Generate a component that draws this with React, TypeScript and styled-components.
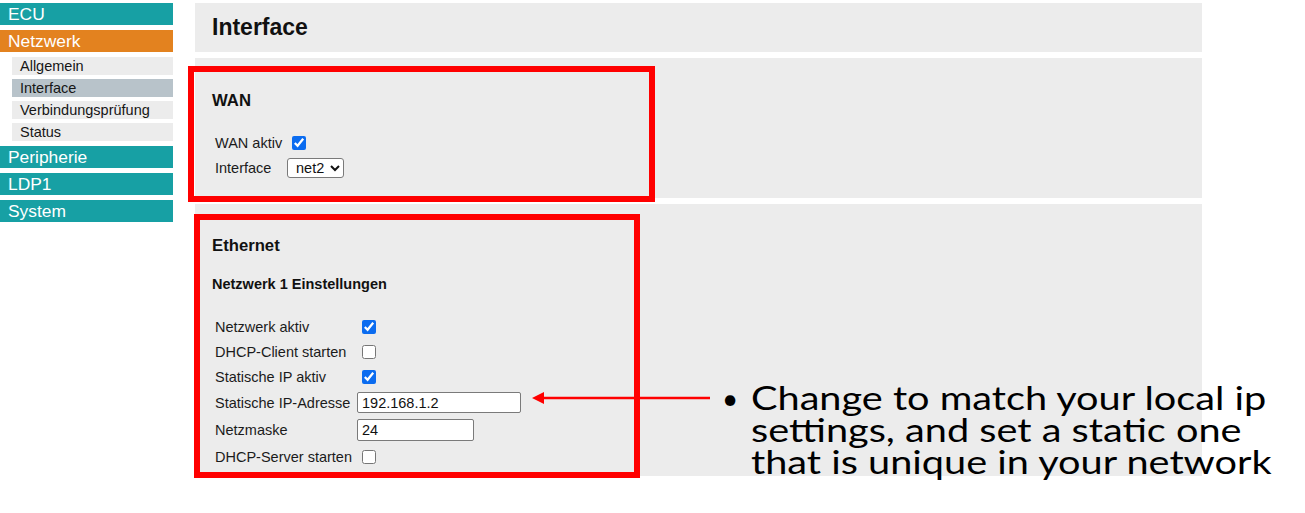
import React from "react";
import styled, { createGlobalStyle } from "styled-components";

const GlobalStyle = createGlobalStyle`
  html, body {
    margin: 0;
    padding: 0;
    background: #ffffff;
  }
  body {
    font-family: "Liberation Sans", Arial, sans-serif;
    color: #1b1b1b;
  }
`;

const Page = styled.div`
  position: relative;
  display: flex;
  align-items: flex-start;
  width: 1305px;
  height: 513px;
  padding-top: 3px;
  box-sizing: border-box;
  overflow: hidden;
`;

const Sidebar = styled.nav`
  width: 173px;
  display: flex;
  flex-direction: column;
`;

const NavItem = styled.div<{ $open?: boolean }>`
  height: 22px;
  line-height: 22px;
  margin-bottom: 5px;
  padding-left: 8px;
  font-size: 17.4px;
  color: #ffffff;
  background: ${(p) => (p.$open ? "#e3821f" : "#17a0a4")};
`;

const SubList = styled.div`
  display: flex;
  flex-direction: column;
  gap: 4px;
  padding-left: 12px;
  margin-bottom: 5px;
`;

const SubItem = styled.div<{ $active?: boolean }>`
  height: 18px;
  line-height: 18px;
  padding-left: 8px;
  font-size: 14.5px;
  color: #161616;
  background: ${(p) => (p.$active ? "#b8c3ca" : "#ececec")};
`;

const Main = styled.main`
  margin-left: 22px;
  width: 1007px;
  display: flex;
  flex-direction: column;
  gap: 6px;
`;

const HeaderPanel = styled.div`
  height: 49px;
  display: flex;
  align-items: center;
  padding-left: 17px;
  background: #ececec;
`;

const PageTitle = styled.h2`
  margin: 0;
  font-size: 23px;
  font-weight: bold;
  color: #111;
`;

const Panel = styled.section<{ $top: number; $bottom: number }>`
  padding: ${(p) => p.$top}px 17px ${(p) => p.$bottom}px;
  background: #ececec;
`;

const SectionTitle = styled.h3`
  margin: 0;
  font-size: 16.7px;
  line-height: 19px;
  font-weight: bold;
  color: #111;
`;

const SubTitle = styled.h4`
  margin: 21px 0 0;
  font-size: 14.5px;
  line-height: 17px;
  font-weight: bold;
  color: #111;
`;

const Form = styled.div<{ $labelWidth: number; $gap: number }>`
  display: grid;
  grid-template-columns: ${(p) => p.$labelWidth}px auto;
  margin: ${(p) => p.$gap}px 0 0 3px;
  font-size: 14.5px;
`;

const Label = styled.div<{ $h: number }>`
  height: ${(p) => p.$h}px;
  display: flex;
  align-items: center;
  white-space: nowrap;
  color: #1b1b1b;
`;

const Control = styled.div<{ $h: number }>`
  height: ${(p) => p.$h}px;
  display: flex;
  align-items: center;
`;

const Check = styled.input.attrs({ type: "checkbox" })`
  width: 14px;
  height: 14px;
  margin: 0 0 0 5px;
  accent-color: #0b6cf0;
`;

const Select = styled.select`
  width: 57px;
  height: 20px;
  padding: 0 0 0 4px;
  font-family: "Liberation Sans", Arial, sans-serif;
  font-size: 14.5px;
  color: #111;
  background: #ffffff;
  border: 1px solid #7a7a7a;
  border-radius: 3px;
`;

const TextInput = styled.input<{ $w: number; $h: number }>`
  box-sizing: border-box;
  width: ${(p) => p.$w}px;
  height: ${(p) => p.$h}px;
  padding: 1px 4px;
  font-family: "Liberation Sans", Arial, sans-serif;
  font-size: 14.5px;
  color: #111;
  background: #ffffff;
  border: 1px solid #7a7a7a;
  border-radius: 2px;
`;

const Highlight = styled.div<{ $x: number; $y: number; $w: number; $h: number }>`
  position: absolute;
  left: ${(p) => p.$x}px;
  top: ${(p) => p.$y}px;
  width: ${(p) => p.$w}px;
  height: ${(p) => p.$h}px;
  box-sizing: border-box;
  border: 6px solid #ff0000;
  pointer-events: none;
`;

const Arrow = styled.svg`
  position: absolute;
  left: 530px;
  top: 390px;
`;

const Note = styled.div`
  position: absolute;
  left: 722px;
  top: 382px;
  display: flex;
  gap: 13px;
  font-family: "Lato", "Liberation Sans", sans-serif;
  font-size: 32px;
  line-height: 32px;
  color: #000;
`;

const Bullet = styled.span`
  font-size: 28px;
`;

const NoteText = styled.div`
  transform: scaleX(1.24);
  transform-origin: left center;
  white-space: nowrap;
`;

type Field =
  | { label: string; kind: "check"; checked: boolean; h: number }
  | { label: string; kind: "text"; value: string; w: number; inputH: number; h: number };

const ethernetFields: Field[] = [
  { label: "Netzwerk aktiv", kind: "check", checked: true, h: 25 },
  { label: "DHCP-Client starten", kind: "check", checked: false, h: 25 },
  { label: "Statische IP aktiv", kind: "check", checked: true, h: 25 },
  { label: "Statische IP-Adresse", kind: "text", value: "192.168.1.2", w: 164, inputH: 21, h: 27 },
  { label: "Netzmaske", kind: "text", value: "24", w: 117, inputH: 22, h: 28 },
  { label: "DHCP-Server starten", kind: "check", checked: false, h: 25 },
];

export default function App() {
  return (
    <>
      <GlobalStyle />
      <Page>
        <Sidebar>
          <NavItem>ECU</NavItem>
          <NavItem $open>Netzwerk</NavItem>
          <SubList>
            <SubItem>Allgemein</SubItem>
            <SubItem $active>Interface</SubItem>
            <SubItem>Verbindungsprüfung</SubItem>
            <SubItem>Status</SubItem>
          </SubList>
          <NavItem>Peripherie</NavItem>
          <NavItem>LDP1</NavItem>
          <NavItem>System</NavItem>
        </Sidebar>

        <Main>
          <HeaderPanel>
            <PageTitle>Interface</PageTitle>
          </HeaderPanel>

          <Panel $top={33} $bottom={18}>
            <SectionTitle>WAN</SectionTitle>
            <Form $labelWidth={72} $gap={20}>
              <Label $h={25}>WAN aktiv</Label>
              <Control $h={25}>
                <Check defaultChecked />
              </Control>
              <Label $h={25}>Interface</Label>
              <Control $h={25}>
                <Select defaultValue="net2">
                  <option value="net1">net1</option>
                  <option value="net2">net2</option>
                </Select>
              </Control>
            </Form>
          </Panel>

          <Panel $top={32} $bottom={7}>
            <SectionTitle>Ethernet</SectionTitle>
            <SubTitle>Netzwerk 1 Einstellungen</SubTitle>
            <Form $labelWidth={142} $gap={21}>
              {ethernetFields.map((f) => (
                <React.Fragment key={f.label}>
                  <Label $h={f.h}>{f.label}</Label>
                  <Control $h={f.h}>
                    {f.kind === "check" ? (
                      <Check defaultChecked={f.checked} />
                    ) : (
                      <TextInput type="text" defaultValue={f.value} $w={f.w} $h={f.inputH} />
                    )}
                  </Control>
                </React.Fragment>
              ))}
            </Form>
          </Panel>
        </Main>

        <Highlight $x={188} $y={66} $w={467} $h={136} />
        <Highlight $x={194} $y={214} $w={446} $h={264} />

        <Arrow width="182" height="16" viewBox="0 0 182 16">
          <line x1="12" y1="8" x2="180" y2="8" stroke="#ff0000" strokeWidth="2.5" />
          <polygon points="2,8 14,2 14,14" fill="#ff0000" />
        </Arrow>

        <Note>
          <Bullet>•</Bullet>
          <NoteText>
            Change to match your local ip
            <br />
            settings, and set a static one
            <br />
            that is unique in your network
          </NoteText>
        </Note>
      </Page>
    </>
  );
}
